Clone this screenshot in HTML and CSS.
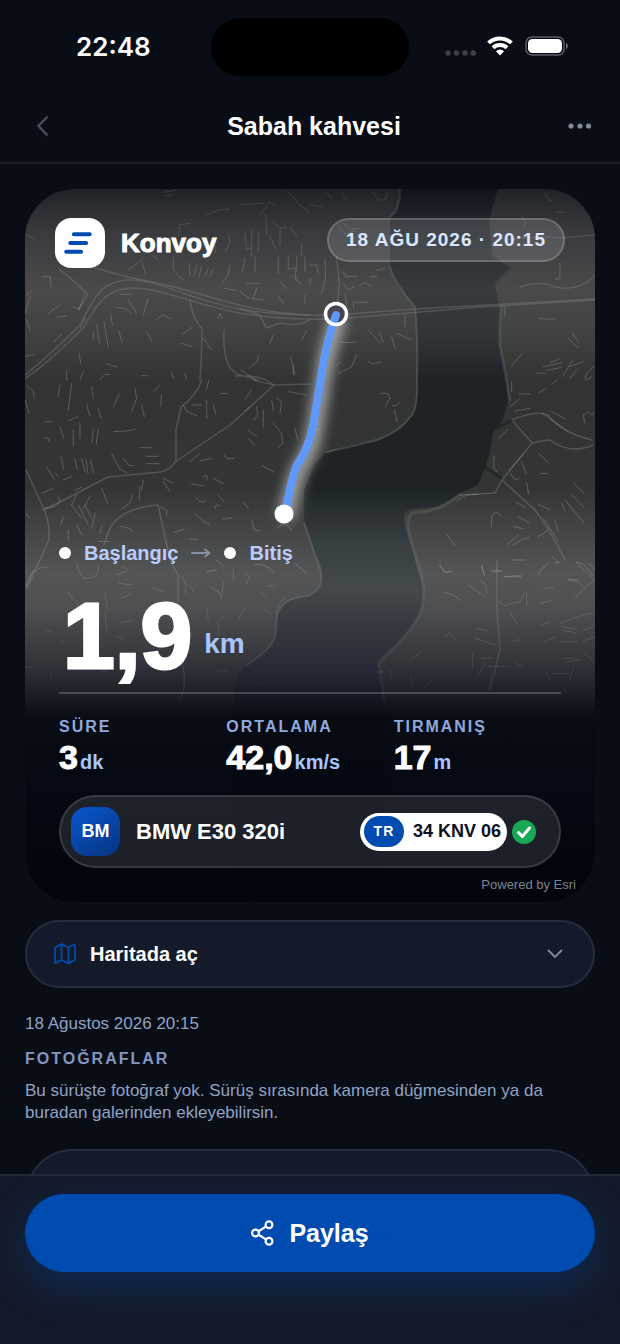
FILE: index.html
```html
<!DOCTYPE html>
<html lang="tr">
<head>
<meta charset="utf-8">
<meta name="viewport" content="width=device-width, initial-scale=1">
<title>Sabah kahvesi</title>
<link rel="stylesheet" href="styles.css">
</head>
<body>
<div class="screen">
  <div class="status">
    <span class="status-time">22:48</span>
    <span class="island"></span>
    <div class="status-icons">
      <svg width="124" height="24" viewBox="0 0 124 24" aria-hidden="true">
        <g fill="#3d4046"><circle cx="3" cy="18" r="2.800"/><circle cx="11.500" cy="18" r="2.800"/><circle cx="20" cy="18" r="2.800"/><circle cx="28.300" cy="18" r="2.800"/></g>
        <g fill="none" stroke="#fff" stroke-width="4"><path d="M43.500 7.900a17 17 0 0 1 23 0"/><path d="M48 12.800a10.400 10.400 0 0 1 14 0"/></g>
        <path d="M50.900 16.200a6 6 0 0 1 8.200 0L55 20.500z" fill="#fff"/>
        <rect x="81" y="2" width="38" height="18" rx="6" fill="none" stroke="#5b5e64" stroke-width="1.500"/>
        <rect x="83" y="4" width="34" height="14" rx="4.500" fill="#fff"/>
        <path d="M121 8c2.500 1 2.500 5 0 6z" fill="#6b6e74"/>
      </svg>
    </div>
  </div>

  <header class="topbar">
    <button class="icon-button" type="button" aria-label="Geri">
      <svg width="12" height="22" viewBox="0 0 12 22"><path d="M11.500 1.500 2.500 11l9 9.500" fill="none" stroke="#484e5c" stroke-width="2.400"/></svg>
    </button>
    <h1 class="title">Sabah kahvesi</h1>
    <button class="icon-button icon-button-end" type="button" aria-label="Diğer">
      <svg width="24" height="6" viewBox="0 0 24 6" fill="#858b99"><circle cx="3" cy="3" r="2.600"/><circle cx="12" cy="3" r="2.600"/><circle cx="20.500" cy="3" r="2.600"/></svg>
    </button>
  </header>

  <main class="content">
    <article class="ride-card">
      <svg class="map" viewBox="25 189 570 713" preserveAspectRatio="xMidYMid slice" aria-hidden="true">
        <defs>
          <linearGradient id="land" gradientUnits="userSpaceOnUse" x1="0" y1="189" x2="0" y2="902">
            <stop offset="0" stop-color="#202329"/><stop offset=".06" stop-color="#393a3e"/><stop offset=".14" stop-color="#4a4a4b"/>
            <stop offset=".2" stop-color="#414242"/><stop offset=".27" stop-color="#323333"/><stop offset=".42" stop-color="#343535"/>
            <stop offset=".54" stop-color="#545556"/><stop offset=".59" stop-color="#4e4f51"/><stop offset=".67" stop-color="#303239"/>
            <stop offset=".71" stop-color="#1b1e26"/><stop offset=".74" stop-color="#080c14"/><stop offset=".84" stop-color="#050913"/><stop offset="1" stop-color="#02050d"/>
          </linearGradient>
          <linearGradient id="water" gradientUnits="userSpaceOnUse" x1="0" y1="189" x2="0" y2="902">
            <stop offset="0" stop-color="#11151e"/><stop offset=".06" stop-color="#262a30"/><stop offset=".14" stop-color="#363b3e"/>
            <stop offset=".2" stop-color="#30363a"/><stop offset=".27" stop-color="#1e2426"/><stop offset=".42" stop-color="#1e2426"/>
            <stop offset=".5" stop-color="#394043"/><stop offset=".56" stop-color="#43494c"/><stop offset=".62" stop-color="#33383f"/>
            <stop offset=".68" stop-color="#242835"/><stop offset=".71" stop-color="#161a24"/><stop offset=".74" stop-color="#070b13"/><stop offset=".84" stop-color="#040812"/><stop offset="1" stop-color="#02050d"/>
          </linearGradient>
          <linearGradient id="fade" gradientUnits="userSpaceOnUse" x1="0" y1="189" x2="0" y2="902">
            <stop offset="0" stop-color="#fff" stop-opacity=".4"/><stop offset=".12" stop-color="#fff" stop-opacity=".85"/><stop offset=".55" stop-color="#fff"/>
            <stop offset=".68" stop-color="#fff" stop-opacity=".45"/><stop offset=".76" stop-color="#fff" stop-opacity=".05"/><stop offset="1" stop-color="#fff" stop-opacity="0"/>
          </linearGradient>
          <mask id="roadFade" maskUnits="userSpaceOnUse" x="25" y="189" width="570" height="713"><rect x="25" y="189" width="570" height="713" fill="url(#fade)"/></mask>
          <filter id="glow" filterUnits="userSpaceOnUse" x="240" y="270" width="150" height="280"><feGaussianBlur stdDeviation="6"/></filter>
        </defs>
        <rect x="25" y="189" width="570" height="713" fill="url(#land)"/>
        <path fill="url(#water)" d="M400 189Q401 207 390 217L390 267Q394 282 402 290L415 307Q418 330 417 380Q418 406 412 415Q400 432 377 440L353 444L327 452L315 463L304 490L304 523L315 555Q326 578 318 588Q312 597 300 597Q282 600 277 615L275 638Q270 650 247 665Q235 675 235 690L232 717V902H390L385 710L382 683L377 663Q380 655 393 647Q413 630 421 612Q426 590 418 572L413 553L404 523Q402 510 412 509L437 507Q450 500 460 493L478 485L485 468L490 453L493 433L503 420L508 400L506 378L499 345L500 310L495 283L510 268L492 255L489 220L498 189Z"/>
        <g fill="none" stroke-linecap="round" stroke-linejoin="round" mask="url(#roadFade)">
          <g stroke="#777" stroke-opacity=".45" stroke-width="2">
            <path d="M400 189Q401 207 390 217M390 267Q394 282 415 307Q418 340 417 380Q418 406 412 415Q400 432 377 440L327 452M304 523L315 555Q326 578 318 588Q312 597 300 597Q282 600 277 615L275 638Q270 650 247 665"/>
            <path d="M502 305Q497 335 503 360L510 400M460 495Q440 512 412 513Q406 520 409 533L420 570Q428 592 420 614Q405 640 379 663L384 700" stroke-width="3" stroke-opacity=".3"/>
          </g>
          <!-- main roads -->
          <g stroke="#85878a" stroke-opacity=".42" stroke-width="1.500">
            <path d="M25 375Q50 355 80 325C94 300 98 282 128 280C155 278 190 300 240 309Q280 316 336 315L415 309L595 299"/>
            <path d="M25 379Q54 358 84 327C98 302 106 290 130 288C160 287 200 307 245 314Q285 320 336 319L480 307L595 300"/>
            <path d="M95 268L128 277Q180 287 220 300Q270 314 310 315"/>
            <path d="M43 510L60 502L108 477L160 472Q170 470 175 462L230 425L274 385M274 385Q260 374 235 376M274 385L310 384M202 380Q196 396 181 407L176 430V462M26 470L42 505Q50 520 49 540L27 588M158 505Q120 508 109 530L104 545M158 505L170 560L178 575V650Q190 680 180 700M190 300Q192 318 202 329Q202 355 200 380M224 330Q222 370 240 375L258 380M60 270Q76 282 88 295L78 310"/>
            <path d="M512 420L532 443L502 480L535 510Q550 530 565 560M512 420Q535 410 548 415Q560 432 592 440M532 443Q545 440 550 440Q570 455 593 445M502 480L495 493L460 495M520 287Q540 280 555 287Q580 292 595 275M505 240Q545 235 560 238L595 235M497 560V610L500 650L490 690M240 309L260 315L266 328L280 323Q290 325 300 324L310 320"/>
          </g>
          <!-- local streets, northern sheets -->
          <g stroke="#aaa" stroke-opacity=".38" stroke-width="3">
            <g transform="translate(0 180) scale(.3333)">
              <path d="M490 37l35-6M495 47l25-4M620 104l34-14 35-3M862 33l40 45 28 20M780 105l28-38 22 10M720 75l70-5M797 105l3 60M820 125l20 20 20-5M535 135l35-5M540 140l-5 28M735 160l5 48 15-5 0 27M755 150v50M775 155v60M810 170l20 40M840 150v45M870 140l20 30M905 190v40M645 170l0 50M685 160l5 30-15 25M735 235l-8 40M765 230v45M690 255l-5 30-15 20M835 230v50M865 228v40l20-5 3 40M890 228v45M915 230v45M430 235l-45 35M425 245l12 38M520 230v40l30 30M568 250l2 35M590 255l-8 35M605 260l-8 30M625 262l-10 28M640 265l-10 25M455 225l20 15M740 310h40M675 325l30 5M770 325l-10 30M840 305l20 20M875 285l30 30M80 165l25 12M125 290h25l3 30M80 345l15-12M90 350l-15 50M145 400l35-25M170 412l30-5M218 380l20 8 15-45M360 343h35M385 360l25 40M445 355l-15 50M350 382l30 5 15 15M468 420l20-15 25 12M240 445l18-30M312 425l12 75M290 435l8 55M332 405l5 30M357 455l10 32M440 455l15 30M280 455v25M160 488l25-25M548 462l28-20M545 490l32 10M610 475l25 35M655 415l5-15 8 15M820 465l-10 25M905 480l15-28M775 525l-3 20-25 20M872 530l12 55M880 555v30M75 530l25-6M237 520l5 30M318 550l25 10h10M200 570v30M250 575l-10 25M300 598l15-15h15M425 587h18M520 595l-6-20M555 580l5 20M722 570l45 30M80 420l10 30M835 350l15 20M915 345v25M720 335l30 20 40 5"/>
            </g>
            <g transform="translate(310 180) scale(.3333)">
              <path d="M0 75l35 5 5-8M50 35l15 22M95 40l15 18M190 38l15 22h20l8-20M265 60l-5 35-18 15M85 135l20 28 30-10M100 130l22 20 30-7M0 255h20l5 25M0 315v-20M45 235l2 60-12 45M80 230l8 80-5 55M95 275l15 10M105 290h35M100 310l15 20 18-10M150 315l15-8 20 12M105 340l5 35M130 385v-18h45M200 270l25-4M180 290h20M285 405v35M95 487h45M175 450l35 38M210 460l10 28M245 470l10 35M260 460l45 20M140 525l-15 35-40 20M175 545l10 6 28-5M80 555l10-10M635 110l15 18-10 17M740 97h24M705 40q10 30 25 20M750 250v45l-12 3M685 414l15 3h35M785 458l22 30M775 475l28 28M635 522l-30 35M720 548l30-12M700 560l55-12M710 572l45-10M788 540l-30 50M820 545l-40 15M850 560l-20 20-5 20M680 580h25M585 378v30M800 570l-20 25M845 590l-15 10"/>
            </g>
            <!-- middle sheets -->
            <g transform="translate(0 380) scale(.3333)">
              <path d="M80 15l20 20 3 20M75 60l12 40M180 15l-6 35M215 10l-10 80M275 20l5 35M260 75l10 32M295 85l8 30M340 80l18-38M405 25l5 30-15 40M460 35l20-20M485 45l-3 35M425 75l8 35M135 125h22M205 122l30-12M180 142l12 35M220 150v50M240 130v45M280 148l-5 40M294 148l-5 45M135 175q15-5 12 10M340 155l40-2 25-5M420 203h35M440 229h35M440 251h38M335 222l25 45 20 12M370 235l18 22h15M183 230l8 38M140 262l25 38M225 237l6 30M245 235l10 40M258 238l5 40M272 240l8 38M165 280l10 10M190 300l25-10M125 340l35-15M175 350l5 15-15 15-30 5M225 330l20-8M305 325l18 45M270 350l-20 35M230 345l-15 30M215 375l30 40M235 375l30 60M255 375l20 40M285 400l-10 45M190 410l-8 25M230 435l15 30M205 450v30M300 460l5-20M398 345l-10 25-25 18M418 320v40M362 438l30 8 5 10M430 300l-5 30M490 295l30 15M490 305l20 30M550 75l10 20 30 12M575 75h30M620 60v55M640 75l8 30M627 0l-8 30M660 40h22M755 30l-20 28M735 95l15-15M770 80l3 25-12 15M790 90v50M815 60l5 30M830 55l15 10-5 35M745 150l25 20M745 175l20 22M820 130l25 30 3 30-12 12M885 145l8 35M865 35l55 10M760 0l60 15M570 245l30-25M600 242l35-6M672 225l10 12 20-2M788 258l35 18M575 312l35 5M608 290q20-10 12 10M640 295l30 15M590 355q20 20 28 5M655 345l18 22M645 385q5-20 15-5M585 400l20 20 22 12M670 418l25-5M730 365l15 20M755 420l8 30 15 3M480 380l20 12v15M520 458l32-10M568 478h25M295 484h35M650 540l20 20M620 575l30-5M760 555q30-10 60 20M885 550l35 30M350 585l30-12M830 445l25-15 20 20M75 400l15 15"/>
            </g>
            <g transform="translate(310 380) scale(.3333)">
              <path d="M210 40q30-5 30 15l-15 25M268 65l-8 12h-12M253 90l8 35M0 140l30 10M605 5v30M740 0l-15 12M627 42h32M685 40l22-15M600 80l28-22M615 93l45-8M565 178l28-30M552 228v35l8 12M640 222l-42 48M635 245l12 35M600 280l15 20 12-5M685 220l30 28M690 280h22M725 95l42 22M695 98q30 20 78 55M825 130l-5-25 15-8M835 95l10 10 12-10M790 308l32 32M785 345l38 38M765 360l58 70M755 368l10 25M650 308l6 35M620 368l28 15M685 374l35 15M700 415l45 70M735 420l10 35M625 410l32 18M610 438l28 8M590 495l35-30M610 495l25-15 22-8M685 470l28-18M545 440v-30q12-25 30 0M410 463l25 33M440 365q20-25 65-22M388 555l15 22 22-5M515 560l8 25M545 573h30M583 590h50M607 540h40M683 585l10-15 20-20M725 528l22 22M735 550l12-4M800 547l20 5 30 35M835 550l20 20M775 598l30 2"/>
            </g>
            <!-- southern sheets -->
            <g transform="translate(0 560) scale(.3333)" stroke-opacity=".28">
              <path d="M230 10q10 50 35 45 35 0 30-40M100 30l-20 50M205 95l15 25M230 120l5 30M260 150v30M315 100l8 50M365 115l30-15M355 70l45 5M385 30l-20-10M460 85l30 10M545 50l15 25-5 25M570 75l10 20M630 80l30 20M655 90l8 20M670 65l-5 50M700 25v40M735 40l15 12-12 20M800 78h20M780 95l20 20M795 150l20 12M735 145l-20 30M620 145l5 35M315 160l5 50M360 190l40-10M650 190l20-20M655 225v-35M180 240l15 10M75 322h20M280 215l20 15M150 340l5 15M645 333h40M770 365l20 10M300 330l20 5M75 80q15-60 70-60M860 110q-30 20-30 50M500 290l20-15M350 230l25 8M135 210l20 5"/>
            </g>
            <g transform="translate(310 560) scale(.3333)" stroke-opacity=".32">
              <path d="M390 15l18 24 18-5M515 15l8 30M545 33h32M583 50l50-4M400 97l25 5 30 20M475 75l50 35M512 62l15 12 3 25M565 125q25 20 40 5l25-5 12-25M650 100v35M700 85l30-3M690 130l35-8M775 60q30 0 42 18M800 10l50 45M795 112l60-55M600 155l20 35M500 205l32 8M495 235l62 20M405 228l15-8 20 25M608 245l22-6M695 195l25-10M705 245l30-15M750 190q50-20 95-30M755 200l45 8M755 210l45 10M750 245h50M815 245l40-15M820 210l30-10M488 280v45M515 295h35M525 310l-25 45M530 320h70M610 305l30 15M300 300l35-25M240 330l3 25M302 350l5 30M345 380l18-15M708 335l12 25M725 340h50M755 295h40M765 305l50-5M790 320l-10 40M200 336h22M545 340l-10 50M820 280l30 20"/>
            </g>
          </g>
        </g>
        <g stroke="#232728" stroke-width="3" stroke-linecap="round"><path d="M497 428l14-7M485 467l16 11"/></g>
        <g fill="none" stroke-linecap="round" stroke-linejoin="round">
          <path d="M337 322C331 342 327 352 325 367C322 384 319 407 315 427C313 445 307 456 300 467C294 480 291 496 287 512" stroke="#fff" stroke-opacity=".5" stroke-width="17" filter="url(#glow)"/>
          <circle cx="336" cy="314" r="10.500" fill="#45474a"/>
          <path d="M336 315C330 332 326 348 323 365C320 382 317 405 313 425C310 443 304 454 297 465C291 478 289 496 285 514" stroke="#5f98f8" stroke-width="8"/>
          <circle cx="336" cy="314" r="10.500" stroke="#fff" stroke-width="3.500"/>
          <circle cx="284" cy="514" r="9.500" fill="#fff"/>
        </g>
      </svg>

      <div class="card-head">
        <div class="brand">
          <svg class="brand-mark" viewBox="0 0 49 49" aria-hidden="true"><rect width="49" height="49" rx="16" fill="#fff"/><g stroke="#004bb0" stroke-width="4" stroke-linecap="round"><path d="M18.500 16H34M15 24.500h15.500M11 33h14.500"/></g></svg>
          <span class="brand-name">Konvoy</span>
        </div>
        <time class="date-pill" datetime="2026-08-18T20:15">18 AĞU 2026 · 20:15</time>
      </div>

      <div class="card-body">
        <div class="route">
          <span class="dot"></span><span>Başlangıç</span>
          <svg width="20" height="10" viewBox="0 0 20 10" aria-hidden="true"><path d="M1 5h17M14 1.500 18.500 5 14 8.500" fill="none" stroke="#8790a8" stroke-width="1.800" stroke-linecap="round" stroke-linejoin="round"/></svg>
          <span class="dot"></span><span>Bitiş</span>
        </div>
        <div class="distance"><span class="distance-value">1,9</span><span class="distance-unit">km</span></div>
        <dl class="stats">
          <div><dt>SÜRE</dt><dd>3<small>dk</small></dd></div>
          <div><dt>ORTALAMA</dt><dd>42,0<small>km/s</small></dd></div>
          <div><dt>TIRMANIŞ</dt><dd>17<small>m</small></dd></div>
        </dl>
        <div class="vehicle">
          <span class="avatar">BM</span>
          <span class="vehicle-name">BMW E30 320i</span>
          <span class="plate"><span class="plate-country">TR</span>34 KNV 06</span>
          <svg class="check" viewBox="0 0 24 24" role="img" aria-label="Doğrulandı"><circle cx="12" cy="12" r="12" fill="#18a957"/><path d="m6.500 12.500 3.800 4 7.200-8.500" fill="none" stroke="#fff" stroke-width="3" stroke-linecap="round" stroke-linejoin="round"/></svg>
        </div>
      </div>
      <p class="credit">Powered by Esri</p>
    </article>

    <button class="map-toggle" type="button" aria-expanded="false">
      <svg width="22" height="22" viewBox="0 0 22 22" fill="none" stroke="#004bb0" stroke-width="1.800" stroke-linejoin="round" aria-hidden="true"><path d="M1 5.500Q1 4.500 2 4L7.500 1l7 3.500L20 1.500q1-.5 1 .8V16q0 1-1 1.500L14.500 20.500l-7-3.500L2 20q-1 .5-1-.8zM7.500 1v16M14.500 4.500v16"/></svg>
      <span class="map-toggle-label">Haritada aç</span>
      <svg width="16" height="10" viewBox="0 0 16 10" aria-hidden="true"><path d="m1 1 7 7 7-7" fill="none" stroke="#868c99" stroke-width="1.800"/></svg>
    </button>

    <p class="ride-date">18 Ağustos 2026 20:15</p>
    <h2 class="section-title">FOTOĞRAFLAR</h2>
    <p class="empty-text">Bu sürüşte fotoğraf yok. Sürüş sırasında kamera düğmesinden ya da buradan galerinden ekleyebilirsin.</p>
    <div class="panel"></div>
  </main>

  <footer class="actions">
    <button class="share" type="button">
      <svg width="23" height="26" viewBox="0 0 23 26" fill="none" stroke="#fff" stroke-width="2.200" aria-hidden="true"><circle cx="4.500" cy="13" r="3.400"/><circle cx="18" cy="4.800" r="3.400"/><circle cx="18" cy="21.200" r="3.400"/><path d="m7.500 11.200 7.500-4.600M7.500 14.800l7.500 4.600"/></svg>
      <span>Paylaş</span>
    </button>
  </footer>
</div>
</body>
</html>
```

FILE: styles.css
```css
* { box-sizing: border-box; }

body {
  margin: 0;
  background: #090d16;
  color: #fff;
  font-family: "Liberation Sans", Arial, sans-serif;
}

h1, h2, p, dl, dd { margin: 0; }

button {
  border: 0;
  padding: 0;
  background: none;
  color: inherit;
  font: inherit;
  cursor: pointer;
}

svg { display: block; flex: none; }

.screen {
  display: flex;
  flex-direction: column;
  height: 100vh;
}

/* status bar */
.status {
  display: grid;
  grid-template-columns: 1fr auto 1fr;
  align-items: center;
  padding-top: 18px;
  flex: none;
}

.status-time {
  padding-left: 76px;
  font: 600 26px/32px Inter, sans-serif;
}

.island {
  width: 198px;
  height: 58px;
  border-radius: 29px;
  background: #000;
}

.status-icons { padding-left: 36px; }

/* top bar */
.topbar {
  display: grid;
  grid-template-columns: 1fr auto 1fr;
  align-items: center;
  flex: none;
  height: 88px;
  padding: 14px 28px 0 36px;
  border-bottom: 2px solid #1b1f28;
}

.title { font-size: 25px; line-height: 32px; font-weight: 700; }
.icon-button { justify-self: start; }
.icon-button-end { justify-self: end; }

/* scrolling content */
.content {
  flex: 1;
  min-height: 0;
  overflow-y: auto;
  scrollbar-width: none;
  padding: 25px 25px 0;
}

.ride-card {
  position: relative;
  display: flex;
  flex-direction: column;
  aspect-ratio: 570 / 713;
  border-radius: 50px;
  overflow: hidden;
}

.map {
  position: absolute;
  inset: 0;
  width: 100%;
  height: 100%;
}

.card-head, .card-body, .credit { position: relative; }

.card-head {
  display: flex;
  justify-content: space-between;
  align-items: flex-start;
  padding: 29px 30px 0;
}

.brand { display: flex; align-items: center; gap: 16px; }
.brand-mark { width: 50px; height: 50px; }

.brand-name {
  font-size: 26px;
  font-weight: 700;
  -webkit-text-stroke: 1px currentColor;
}

.date-pill {
  padding: 9px 17px;
  border: 2px solid rgba(255, 255, 255, .18);
  border-radius: 22px;
  background: rgba(255, 255, 255, .13);
  color: #dbe6ff;
  font-size: 19px;
  line-height: 22px;
  font-weight: 700;
  letter-spacing: 1px;
}

.card-body { margin-top: auto; padding: 0 34px; }

.route {
  display: flex;
  align-items: center;
  gap: 13px;
  color: #b9cdfb;
  font-size: 20px;
  line-height: 24px;
  font-weight: 700;
}

.dot { width: 12px; height: 12px; border-radius: 50%; background: #fff; }

.distance {
  display: flex;
  align-items: flex-end;
  gap: 12px;
  margin-top: 31px;
  padding: 0 0 16px 4px;
  border-bottom: 2px solid rgba(255, 255, 255, .2);
  font-weight: 700;
}

.distance-value {
  font-size: 93px;
  line-height: 80px;
  -webkit-text-stroke: 3px currentColor;
}

.distance-unit {
  padding-bottom: 16px;
  color: #a9c6ff;
  font-size: 28px;
  line-height: 32px;
}

.stats {
  display: grid;
  grid-template-columns: repeat(3, 1fr);
  padding-top: 23px;
}

.stats dt {
  color: #90a9dd;
  font-size: 16px;
  line-height: 20px;
  font-weight: 700;
  letter-spacing: 2px;
}

.stats dd {
  display: flex;
  align-items: baseline;
  gap: 2px;
  margin-top: 3px;
  font-size: 34px;
  line-height: 35px;
  font-weight: 700;
  -webkit-text-stroke: 1px currentColor;
}

.stats small {
  color: #a9c6ff;
  font-size: 20px;
  line-height: 24px;
  -webkit-text-stroke: 0;
}

.vehicle {
  display: flex;
  align-items: center;
  margin-top: 20px;
  height: 73px;
  padding: 0 23px 0 10px;
  border: 2px solid rgba(255, 255, 255, .12);
  border-radius: 37px;
  background: rgba(255, 255, 255, .1);
}

.avatar {
  display: grid;
  place-items: center;
  width: 49px;
  height: 49px;
  border-radius: 16px;
  background: linear-gradient(145deg, #0957cf, #05347f);
  font-size: 18px;
  font-weight: 700;
}

.vehicle-name { flex: 1; padding-left: 16px; font-size: 22px; font-weight: 700; }

.plate {
  display: flex;
  align-items: center;
  gap: 9px;
  height: 38px;
  padding: 0 6px 0 4px;
  border-radius: 19px;
  background: #fff;
  color: #0b1120;
  font-size: 18px;
  font-weight: 700;
}

.plate-country {
  width: 40px;
  border-radius: 16px;
  background: #004bb0;
  color: #fff;
  font-size: 14px;
  line-height: 31px;
  letter-spacing: 1px;
  text-align: center;
}

.check { width: 24px; height: 24px; margin-left: 5px; }

.credit {
  padding: 9px 19px 9px;
  color: #80838a;
  font-size: 13px;
  line-height: 16px;
  text-align: right;
}

.map-toggle {
  display: flex;
  align-items: center;
  gap: 14px;
  width: 100%;
  height: 68px;
  margin-top: 18px;
  padding: 0 30px 0 27px;
  border: 2px solid #272d3a;
  border-radius: 34px;
  background: #141a29;
  text-align: left;
}

.map-toggle-label { flex: 1; font-size: 20px; font-weight: 700; }

.ride-date, .empty-text { color: #91a3c4; font-size: 17px; line-height: 22px; }
.ride-date { margin-top: 25px; }

.section-title {
  margin-top: 14px;
  color: #8297c0;
  font-size: 16px;
  line-height: 20px;
  font-weight: 700;
  letter-spacing: 2px;
}

.empty-text { margin-top: 11px; }

.panel {
  height: 160px;
  margin-top: 25px;
  border: 2px solid #272d3a;
  border-radius: 48px;
  background: #141a29;
}

/* bottom action bar */
.actions {
  flex: none;
  overflow: hidden;
  padding: 18px 25px 72px;
  border-top: 2px solid #242a38;
  background: #141a29;
}

.share {
  display: flex;
  align-items: center;
  justify-content: center;
  gap: 15px;
  width: 100%;
  height: 78px;
  border-radius: 39px;
  background: #004bb0;
  box-shadow: 0 14px 44px rgba(0, 75, 176, .35);
  font-size: 25px;
  font-weight: 700;
}
```
